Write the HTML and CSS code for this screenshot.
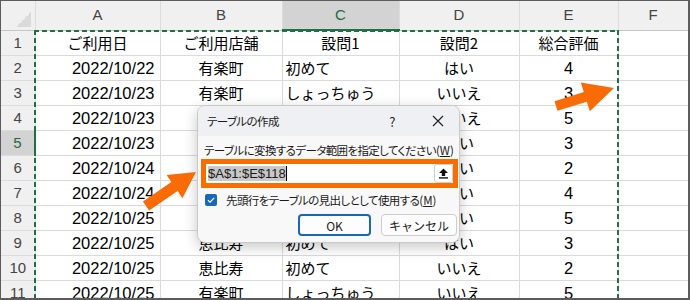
FILE: index.html
```html
<!DOCTYPE html>
<html lang="ja">
<head>
    <meta charset="UTF-8">
    <title>テーブルの作成</title>
    <link rel="stylesheet" href="styles.css">
</head>
<body>
    <div class="sheet">
        <table class="grid">
            <colgroup>
                <col style="width:34px">
                <col style="width:125px">
                <col style="width:122px">
                <col style="width:117px">
                <col style="width:120px">
                <col style="width:99px">
                <col style="width:70px">
            </colgroup>
            <tr class="colhead">
                <td class="corner-cell"><div class="corner"></div></td>
                <td>A</td><td>B</td><td class="sel">C</td><td>D</td><td>E</td><td>F</td>
            </tr>
            <tr>
                <td class="rowhead">1</td>
                <td class="center">ご利用日</td><td class="center">ご利用店舗</td><td class="center">設問1</td><td class="center">設問2</td><td class="center">総合評価</td><td></td>
            </tr>
            <tr>
                <td class="rowhead">2</td>
                <td class="num">2022/10/22</td><td class="center">有楽町</td><td class="left">初めて</td><td class="center">はい</td><td class="center num-c">4</td><td></td>
            </tr>
            <tr>
                <td class="rowhead">3</td>
                <td class="num">2022/10/23</td><td class="center">有楽町</td><td class="left">しょっちゅう</td><td class="center">いいえ</td><td class="center num-c">3</td><td></td>
            </tr>
            <tr>
                <td class="rowhead">4</td>
                <td class="num">2022/10/23</td><td class="center">恵比寿</td><td class="left">初めて</td><td class="center">いいえ</td><td class="center num-c">5</td><td></td>
            </tr>
            <tr>
                <td class="rowhead sel">5</td>
                <td class="num">2022/10/23</td><td class="center">有楽町</td><td class="left">初めて</td><td class="center">はい</td><td class="center num-c">3</td><td></td>
            </tr>
            <tr>
                <td class="rowhead">6</td>
                <td class="num">2022/10/24</td><td class="center">恵比寿</td><td class="left">初めて</td><td class="center">はい</td><td class="center num-c">2</td><td></td>
            </tr>
            <tr>
                <td class="rowhead">7</td>
                <td class="num">2022/10/24</td><td class="center">有楽町</td><td class="left">初めて</td><td class="center">はい</td><td class="center num-c">4</td><td></td>
            </tr>
            <tr>
                <td class="rowhead">8</td>
                <td class="num">2022/10/25</td><td class="center">有楽町</td><td class="left">初めて</td><td class="center">はい</td><td class="center num-c">5</td><td></td>
            </tr>
            <tr>
                <td class="rowhead">9</td>
                <td class="num">2022/10/25</td><td class="center">恵比寿</td><td class="left">初めて</td><td class="center">はい</td><td class="center num-c">3</td><td></td>
            </tr>
            <tr>
                <td class="rowhead">10</td>
                <td class="num">2022/10/25</td><td class="center">恵比寿</td><td class="left">初めて</td><td class="center">いいえ</td><td class="center num-c">2</td><td></td>
            </tr>
            <tr>
                <td class="rowhead">11</td>
                <td class="num">2022/10/25</td><td class="center">有楽町</td><td class="left">しょっちゅう</td><td class="center">いいえ</td><td class="center num-c">5</td><td></td>
            </tr>
        </table>

        <!-- copy range marquee -->
        <div class="ants"></div>

        <div class="dialog">
            <div class="dialog-title">
                <span class="title-text">テーブルの作成</span>
                <span class="help">?</span>
                <svg class="close" width="12" height="12" viewBox="0 0 12 12">
                    <path d="M1 1L11 11M11 1L1 11" stroke="#222" stroke-width="1.2" fill="none"/>
                </svg>
            </div>
            <div class="dialog-body">
                <div class="label">テーブルに変換するデータ範囲を指定してください<span class="key">(<u>W</u>)</span></div>
                <div class="range-box">
                    <div class="range-input">
                        <span class="range-text">$A$1:$E$118</span><span class="caret"></span>
                        <span class="collapse-btn">
                            <svg width="11" height="11" viewBox="0 0 11 11">
                                <path d="M5.5 0.5L1 5H3.8V8H7.2V5H10Z" fill="#111"/>
                                <rect x="1" y="9.2" width="9" height="1.4" fill="#111"/>
                            </svg>
                        </span>
                    </div>
                </div>
                <div class="check-row">
                    <span class="checkbox">
                        <svg width="12" height="12" viewBox="0 0 12 12">
                            <path d="M3 6.2L5.1 8.2L9.2 3.9" stroke="#fff" stroke-width="1.2" fill="none"/>
                        </svg>
                    </span>
                    <span>先頭行をテーブルの見出しとして使用する<span class="key">(<u>M</u>)</span></span>
                </div>
                <div class="buttons">
                    <button class="btn primary">OK</button>
                    <button class="btn">キャンセル</button>
                </div>
            </div>
        </div>

        <svg class="arrows" width="690" height="300" viewBox="0 0 690 300">
            <polygon fill="#f96b07" points="149.1,210.5 142.9,201.5 171.4,182.1 166.6,175 196,172 182.4,198.2 177.6,191.1"/>
            <polygon fill="#f96b07" points="557.5,110.8 554.5,101.2 583.8,92.1 580.8,82.6 614,88 589.8,111.2 586.8,101.7"/>
        </svg>
    </div>
</body>
</html>
```

FILE: styles.css
```css
body {
    margin: 0;
    background: #ffffff;
}

.sheet {
    position: relative;
    width: 690px;
    height: 300px;
    box-sizing: border-box;
    border: 1px solid #5c5c5c;
    border-right-width: 2px;
    border-bottom-width: 2px;
    overflow: hidden;
    font-family: "Liberation Sans", "Noto Sans CJK JP", sans-serif;
    color: #000;
}

.grid {
    border-collapse: collapse;
    table-layout: fixed;
    width: 687px;
}

.grid td {
    height: 24px;
    padding: 0;
    border: 1px solid #dadada;
    font-size: 15px;
    font-family: "Noto Sans CJK JP", sans-serif;
    white-space: nowrap;
    overflow: hidden;
    line-height: 20px;
}

.grid tr:first-child td {
    border-top: none;
}

.grid td:first-child {
    border-left: none;
}

.colhead td {
    height: 28px;
    background: #f0f0f0;
    color: #444;
    text-align: center;
    font-family: "Liberation Sans", sans-serif;
    font-size: 15px;
    border-color: #dcdcdc;
    border-bottom-color: #c6c6c6;
}

.colhead td.sel {
    background: #d3d3d3;
    color: #1e6b41;
    border-bottom: 2px solid #1e7145;
}

.corner-cell {
    vertical-align: bottom;
}

.corner {
    width: 15px;
    height: 15px;
    margin: 0 4px 3px auto;
    background: linear-gradient(to top left, #dadada 50%, transparent 50%);
}

.rowhead {
    background: #f0f0f0;
    color: #444;
    text-align: center;
    font-family: "Liberation Sans", sans-serif !important;
    font-size: 15px !important;
}

.grid td.rowhead {
    border-color: #dcdcdc;
}

.grid td.rowhead.sel {
    background: #d3d3d3;
    color: #1e6b41;
    border-right: 2px solid #1e7145;
}

.center {
    text-align: center;
}

.left {
    text-align: left;
    padding-left: 3px !important;
}

.num {
    text-align: right;
    padding-right: 5px !important;
    font-family: "Liberation Sans", sans-serif !important;
    font-size: 16.5px !important;
}

.num-c {
    font-family: "Liberation Sans", sans-serif !important;
    font-size: 16.5px !important;
}

.ants {
    position: absolute;
    left: 33px;
    top: 29px;
    width: 585px;
    height: 400px;
    background:
        repeating-linear-gradient(90deg, #1e7145 0 5px, transparent 5px 8px) top left / 100% 2px no-repeat,
        repeating-linear-gradient(180deg, #1e7145 0 5px, transparent 5px 8px) top left / 2px 100% no-repeat,
        repeating-linear-gradient(180deg, #1e7145 0 5px, transparent 5px 8px) top right / 2px 100% no-repeat;
}

.dialog {
    position: absolute;
    left: 196px;
    top: 104px;
    width: 263px;
    height: 138px;
    box-sizing: border-box;
    border: 1px solid #c9c9c9;
    border-radius: 8px;
    background: #f8f8f8;
    box-shadow: 0 4px 14px rgba(0, 0, 0, 0.22);
    overflow: hidden;
    font-family: "Noto Sans CJK JP", sans-serif;
    font-size: 11.5px;
    letter-spacing: -0.6px;
    font-feature-settings: "palt";
    color: #1a1a1a;
    white-space: nowrap;
}

.key {
    letter-spacing: 0;
}

.dialog-title {
    display: flex;
    align-items: center;
    height: 30px;
    padding-left: 9px;
    background: #eef0f3;
}

.title-text {
    flex: 1;
}

.help {
    width: 14px;
    text-align: center;
    font-size: 13px;
    margin-right: 33px;
}

.close {
    margin-right: 15px;
}

.dialog-body {
    padding: 5px 2px 0 3px;
}

.label {
    line-height: 18px;
    padding-left: 3px;
}

.range-box {
    border: 5px solid #f86c00;
    width: 247px;
}

.range-input {
    display: flex;
    align-items: center;
    height: 19px;
    background: #fff;
    font-family: "Liberation Sans", sans-serif;
    font-size: 13px;
    letter-spacing: 0;
}

.range-text {
    margin-left: 2px;
    background: #c8c8c8;
    line-height: 15px;
}

.caret {
    width: 1px;
    height: 15px;
    background: #000;
}

.collapse-btn {
    margin-left: auto;
    display: flex;
    align-items: center;
    justify-content: center;
    width: 17px;
    height: 17px;
    border: 1px solid #cfcfcf;
    border-radius: 3px;
    background: #fff;
}

.check-row {
    display: flex;
    align-items: center;
    gap: 9px;
    margin-top: 4px;
    padding-left: 4px;
    line-height: 16px;
}

.checkbox {
    display: flex;
    width: 12px;
    height: 12px;
    border-radius: 2px;
    background: #1a67b8;
}

.buttons {
    display: flex;
    justify-content: flex-end;
    gap: 10px;
    margin-top: 6px;
}

.btn {
    height: 22px;
    padding: 0;
    border: 1px solid #cccccc;
    border-radius: 4px;
    background: #fdfdfd;
    font-family: "Noto Sans CJK JP", sans-serif;
    font-size: 12px;
    color: #1a1a1a;
    width: 76px;
}

.btn.primary {
    width: 73px;
    border: 2px solid #1a67b8;
}

.arrows {
    position: absolute;
    left: -1px;
    top: -1px;
}
```
